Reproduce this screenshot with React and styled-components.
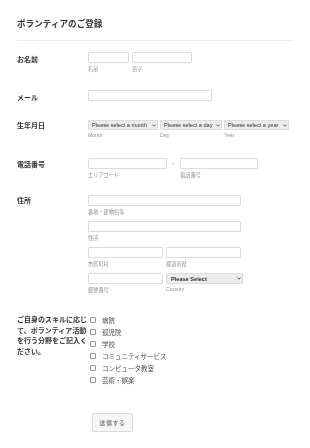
import React from "react";
import styled, { createGlobalStyle } from "styled-components";

const Global = createGlobalStyle`
  html, body { margin: 0; padding: 0; background: #fff; }
  body { font-family: "Liberation Sans", "Noto Sans CJK JP", sans-serif; }
  * { box-sizing: border-box; }
`;

const JP = `"Noto Sans CJK JP", "Liberation Sans", sans-serif`;
const LAT = `"Liberation Sans", "Noto Sans CJK JP", sans-serif`;

const Form = styled.form`
  width: 310px;
  padding: 18px 18px 20px 17px;
  filter: grayscale(1);
`;

const Header = styled.div`
  padding-bottom: 12px;
  border-bottom: 1px solid #e9e9ec;
`;

const Title = styled.h1`
  margin: 0;
  font-family: ${JP};
  font-size: 8.6px;
  line-height: 10px;
  font-weight: 700;
  color: #2c3345;
`;

const Row = styled.div`
  display: flex;
  align-items: flex-start;
  margin-top: ${(p) => p.$mt}px;
`;

const Label = styled.div`
  width: 71px;
  flex: none;
  padding-top: ${(p) => p.$pt || 0}px;
  font-family: ${JP};
  font-size: 7px;
  line-height: ${(p) => p.$lh || 10}px;
  font-weight: 700;
  color: #2c3345;
`;

const Fields = styled.div`
  display: flex;
  flex-direction: column;
  gap: ${(p) => p.$gap || 0}px;
`;

const Line = styled.div`
  display: flex;
  align-items: flex-start;
  gap: ${(p) => p.$gap || 3}px;
`;

const Field = styled.div`
  display: flex;
  flex-direction: column;
  width: ${(p) => p.$w}px;
`;

const Input = styled.input`
  display: block;
  width: 100%;
  height: 11px;
  margin: 0;
  padding: 0 2px;
  border: 1px solid #d9dbe0;
  border-radius: 1px;
  background: #fff;
  outline: none;
`;

const Sub = styled.span`
  margin-top: ${(p) => p.$mt ?? 3}px;
  font-family: ${(p) => (p.$lat ? LAT : JP)};
  font-size: 5.2px;
  line-height: 6px;
  color: #8d8f95;
  white-space: nowrap;
`;

const SelectWrap = styled.div`
  position: relative;
  width: 100%;
  height: ${(p) => p.$h || 10}px;
`;

const Select = styled.select`
  appearance: none;
  -webkit-appearance: none;
  display: block;
  width: 100%;
  height: 100%;
  margin: 0;
  padding: 0 0 0 ${(p) => p.$pl || 3}px;
  border: 1px solid #dcdcdc;
  border-radius: 1px;
  background: #ececec;
  font-family: ${LAT};
  font-size: 5.6px;
  font-weight: ${(p) => (p.$bold ? 700 : 400)};
  color: #2c3345;
  outline: none;
`;

const Chevron = styled.svg`
  position: absolute;
  right: ${(p) => p.$r || 2}px;
  top: 50%;
  width: 4px;
  height: 3px;
  margin-top: -1.5px;
  pointer-events: none;
`;

const Dash = styled.span`
  width: 7px;
  text-align: center;
  font-family: ${LAT};
  font-size: 6px;
  line-height: 11px;
  color: #555;
`;

const Checks = styled.div`
  display: flex;
  flex-direction: column;
`;

const CheckRow = styled.label`
  display: flex;
  align-items: center;
  height: 12px;
  padding-left: 2px;
`;

const Box = styled.span`
  width: 6px;
  height: 6px;
  border: 1px solid #8f9297;
  border-radius: 1px;
  background: #fff;
  flex: none;
`;

const CheckText = styled.span`
  margin-left: 6px;
  font-family: ${JP};
  font-size: 6.5px;
  line-height: 12px;
  color: #4a4d55;
`;

const Button = styled.button`
  width: 41px;
  height: 19px;
  margin: 0 0 0 4px;
  padding: 0;
  border: 1px solid #dadada;
  border-radius: 2px;
  background: #f6f6f6;
  font-family: ${JP};
  font-size: 6px;
  letter-spacing: 0.6px;
  color: #55575d;
`;

const Arrow = ({ r }) => (
  <Chevron viewBox="0 0 8 6" $r={r}>
    <path d="M1 1.2 L4 4.4 L7 1.2" fill="none" stroke="#333" strokeWidth="1.6" />
  </Chevron>
);

const Dropdown = ({ text, bold, h, pl }) => (
  <SelectWrap $h={h}>
    <Select $bold={bold} $pl={pl} defaultValue="">
      <option value="">{text}</option>
    </Select>
    <Arrow />
  </SelectWrap>
);

const skills = ["病院", "孤児院", "学校", "コミュニティサービス", "コンピュータ教室", "芸術・娯楽"];

export default function App() {
  return (
    <>
      <Global />
      <Form onSubmit={(e) => e.preventDefault()}>
        <Header>
          <Title>ボランティアのご登録</Title>
        </Header>

        <Row $mt={11}>
          <Label $pt={2}>お名前</Label>
          <Line>
            <Field $w={41}>
              <Input />
              <Sub>名前</Sub>
            </Field>
            <Field $w={60}>
              <Input />
              <Sub>苗字</Sub>
            </Field>
          </Line>
        </Row>

        <Row $mt={18}>
          <Label $pt={2}>メール</Label>
          <Field $w={124}>
            <Input />
          </Field>
        </Row>

        <Row $mt={18}>
          <Label $pt={0}>生年月日</Label>
          <Line $gap={2}>
            <Field $w={70}>
              <Dropdown text="Please select a month" />
              <Sub $lat $mt={2}>Month</Sub>
            </Field>
            <Field $w={62}>
              <Dropdown text="Please select a day" />
              <Sub $lat $mt={2}>Day</Sub>
            </Field>
            <Field $w={65}>
              <Dropdown text="Please select a year" />
              <Sub $lat $mt={2}>Year</Sub>
            </Field>
          </Line>
        </Row>

        <Row $mt={20}>
          <Label $pt={1}>電話番号</Label>
          <Line $gap={0}>
            <Field $w={79}>
              <Input />
              <Sub>エリアコード</Sub>
            </Field>
            <Dash>-</Dash>
            <Field $w={78}>
              <Input />
              <Sub>電話番号</Sub>
            </Field>
          </Line>
        </Row>

        <Row $mt={17}>
          <Label $pt={0}>住所</Label>
          <Fields $gap={6}>
            <Field $w={153}>
              <Input />
              <Sub>番地・建物名等</Sub>
            </Field>
            <Field $w={153}>
              <Input />
              <Sub>住所</Sub>
            </Field>
            <Line>
              <Field $w={75}>
                <Input />
                <Sub>市区町村</Sub>
              </Field>
              <Field $w={75}>
                <Input />
                <Sub>都道府県</Sub>
              </Field>
            </Line>
            <Line>
              <Field $w={75}>
                <Input />
                <Sub>郵便番号</Sub>
              </Field>
              <Field $w={77}>
                <Dropdown text="Please Select" bold h={11} pl={4} />
                <Sub $lat $mt={2}>Country</Sub>
              </Field>
            </Line>
          </Fields>
        </Row>

        <Row $mt={21}>
          <Label $lh={10.5}>ご自身のスキルに応じて、ボランティア活動を行う分野をご記入ください。</Label>
          <Checks>
            {skills.map((s) => (
              <CheckRow key={s}>
                <Box />
                <CheckText>{s}</CheckText>
              </CheckRow>
            ))}
          </Checks>
        </Row>

        <Row $mt={27}>
          <Label />
          <Button type="submit">送信する</Button>
        </Row>
      </Form>
    </>
  );
}
